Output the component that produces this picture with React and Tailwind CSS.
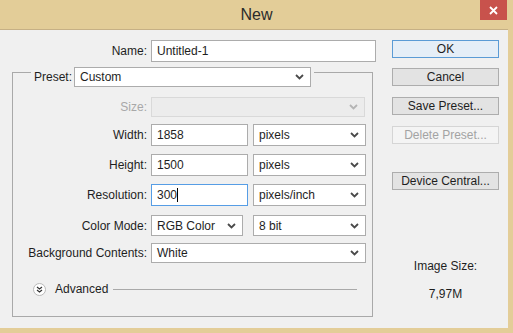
const Chevron = ({ dim }) => (
  <svg width="9" height="6" viewBox="0 0 9 6" className="shrink-0">
    <polyline
      points="1,1 4.5,4.5 8,1"
      fill="none"
      stroke={dim ? "#b4b4b4" : "#4a4a4a"}
      strokeWidth="1.8"
    />
  </svg>
);

const Select = ({ value, className = "", dim }) => (
  <div
    className={`flex items-center justify-between pl-[5px] pr-[6px] border ${
      dim ? "border-[#d9d9d9] bg-[#ececec]" : "border-[#acacac] bg-white"
    } ${className}`}
  >
    <span>{value}</span>
    <Chevron dim={dim} />
  </div>
);

const Input = ({ value, className = "", focus }) => (
  <div
    className={`flex items-center pl-[5px] bg-white border ${
      focus ? "border-[#569de5]" : "border-[#acacac]"
    } ${className}`}
  >
    <span>{value}</span>
    {focus && <span className="w-px h-[14px] bg-black" />}
  </div>
);

const Btn = ({ label, className = "", primary, disabled }) => (
  <div
    className={`w-[107px] h-[18px] flex items-center justify-center border ${
      primary
        ? "border-[#5b9bd5] bg-[#e5eef7]"
        : disabled
        ? "border-[#d5d5d5] bg-[#f4f4f4] text-[#a3a3a3]"
        : "border-[#adadad] bg-[#e3e3e3]"
    } ${className}`}
  >
    {label}
  </div>
);

const Row = ({ label, dim, className = "", children }) => (
  <div className={`flex items-center ${className}`}>
    <span className={`w-[134px] text-right ${dim ? "text-[#a8a8a8]" : ""}`}>
      {label}
    </span>
    <div className="ml-[4px] flex gap-[5px]">{children}</div>
  </div>
);

export default function App() {
  return (
    <div className="w-[513px] h-[333px] bg-[#e3cd98] flex flex-col text-[12px] text-[#1e1e1e] font-['Liberation_Sans',Arial,sans-serif]">
      <div className="h-[29px] shrink-0 relative flex items-center justify-center">
        <span className="text-[16px] text-[#2b2b2b]">New</span>
        <div className="absolute top-0 right-[6px] w-[27px] h-[20px] bg-[#c8524c] flex items-center justify-center">
          <svg width="9" height="9" viewBox="0 0 9 9">
            <path d="M1 1 L8 8 M8 1 L1 8" stroke="#fff" strokeWidth="1.8" />
          </svg>
        </div>
      </div>

      <div className="flex-1 mr-[5px] mb-[5px] bg-[#f0f0f0] border-t border-[#c6b085] flex">
        <div className="w-[384px] pt-[10px]">
          <div className="flex items-center h-[22px]">
            <span className="w-[147px] text-right">Name:</span>
            <Input value="Untitled-1" className="ml-[4px] w-[225px] h-[22px]" />
          </div>

          <div className="mt-[10px] ml-[12px] w-[361px] h-[245px] border border-[#a9a9a9]">
            <div className="-mt-[6px] ml-[18px] w-fit px-[3px] bg-[#f0f0f0] flex items-center">
              <span className="w-[40px]">Preset:</span>
              <Select value="Custom" className="w-[237px] h-[20px]" />
            </div>

            <Row label="Size:" dim className="mt-[10px]">
              <Select value="" dim className="w-[214px] h-[20px]" />
            </Row>
            <Row label="Width:" className="mt-[7px]">
              <Input value="1858" className="w-[97px] h-[22px]" />
              <Select value="pixels" className="w-[113px] h-[22px]" />
            </Row>
            <Row label="Height:" className="mt-[8px]">
              <Input value="1500" className="w-[97px] h-[22px]" />
              <Select value="pixels" className="w-[113px] h-[22px]" />
            </Row>
            <Row label="Resolution:" className="mt-[8px]">
              <Input value="300" focus className="w-[97px] h-[22px]" />
              <Select value="pixels/inch" className="w-[113px] h-[22px]" />
            </Row>
            <Row label="Color Mode:" className="mt-[9px]">
              <Select value="RGB Color" className="w-[92px] h-[21px]" />
              <Select value="8 bit" className="w-[113px] h-[21px] ml-[5px]" />
            </Row>
            <Row label="Background Contents:" className="mt-[7px]">
              <Select value="White" className="w-[215px] h-[20px]" />
            </Row>

            <div className="mt-[17px] ml-[20px] flex items-center h-[18px]">
              <div className="w-[13px] h-[13px] rounded-full border border-[#b9b9b9] bg-white flex items-center justify-center">
                <svg width="7" height="7" viewBox="0 0 7 7">
                  <path d="M1 1 L3.5 3 L6 1 M1 4 L3.5 6 L6 4" fill="none" stroke="#333" strokeWidth="1.2" />
                </svg>
              </div>
              <span className="ml-[9px]">Advanced</span>
              <div className="ml-[5px] w-[244px] h-px bg-[#a9a9a9]" />
            </div>
          </div>
        </div>

        <div className="ml-[8px] pt-[10px] flex flex-col items-center w-[107px]">
          <Btn label="OK" primary />
          <Btn label="Cancel" className="mt-[10px]" />
          <Btn label="Save Preset..." className="mt-[11px]" />
          <Btn label="Delete Preset..." disabled className="mt-[11px]" />
          <Btn label="Device Central..." className="mt-[28px]" />
          <span className="mt-[67px]">Image Size:</span>
          <span className="mt-[10px]">7,97M</span>
        </div>
      </div>
    </div>
  );
}
